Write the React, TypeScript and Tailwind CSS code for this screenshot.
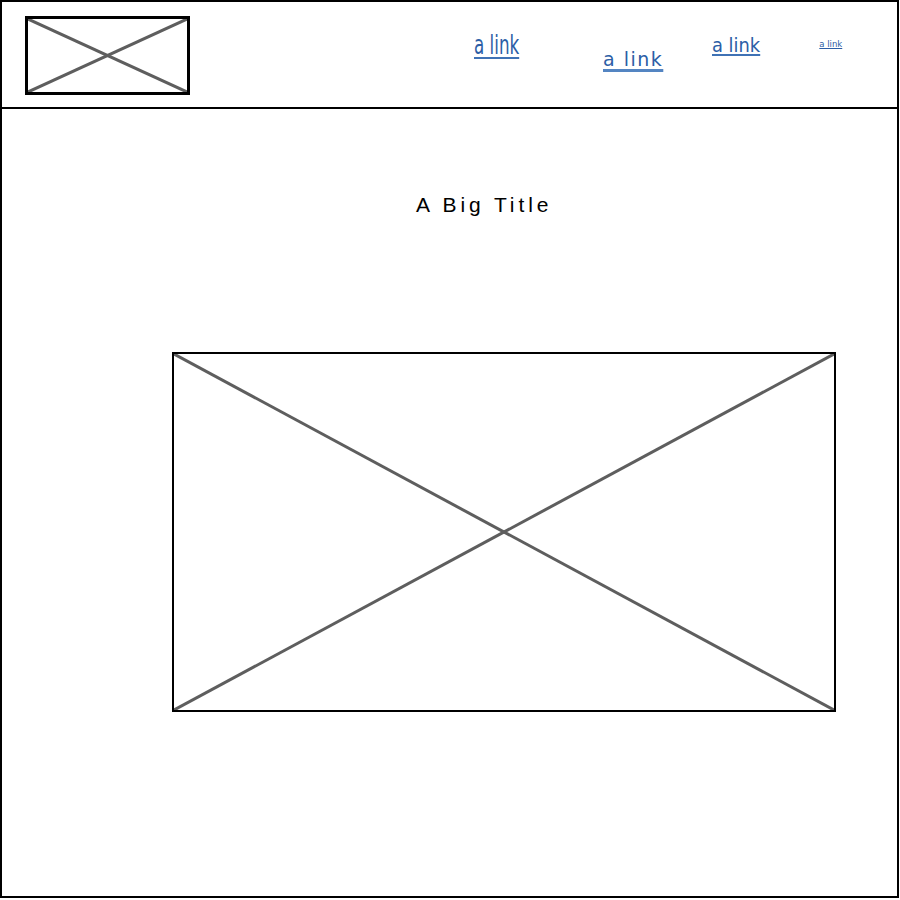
import React from "react";

function Placeholder({ className }: { className: string }) {
  return (
    <div className={`relative bg-white ${className}`}>
      <svg
        className="block w-full h-full"
        viewBox="0 0 100 100"
        preserveAspectRatio="none"
      >
        <line x1="0" y1="0" x2="100" y2="100" stroke="#5e5e5e" strokeWidth="3" vectorEffect="non-scaling-stroke" />
        <line x1="100" y1="0" x2="0" y2="100" stroke="#5e5e5e" strokeWidth="3" vectorEffect="non-scaling-stroke" />
      </svg>
    </div>
  );
}

export default function App() {
  return (
    <div className="w-[899px] h-[898px] border-2 border-black bg-white font-['DejaVu_Sans',sans-serif]">
      {/* Header */}
      <header className="h-[107px] border-b-2 border-black flex items-start">
        <Placeholder className="ml-[23px] mt-[14px] w-[165px] h-[79px] border-[3px] border-black" />

        <a href="#" className="ml-[284px] mt-[29px] w-[45px] block text-[27px] leading-none text-[#2c5ea6]">
          <span className="inline-block origin-left scale-x-[0.62] whitespace-nowrap underline decoration-2 underline-offset-[3px] decoration-[#3f72b5]">
            a link
          </span>
        </a>

        <a href="#" className="ml-[84px] mt-[48px] block whitespace-nowrap text-[19px] tracking-[1.5px] leading-none text-[#2c5ea6] underline decoration-[3px] underline-offset-[3px] decoration-[#5485c2]">
          a link
        </a>

        <a href="#" className="ml-[49px] mt-[34px] w-[48px] block text-[19px] leading-none text-[#2c5ea6]">
          <span className="inline-block origin-left scale-x-[0.94] whitespace-nowrap underline decoration-2 underline-offset-[2px] decoration-[#3f72b5]">
            a link
          </span>
        </a>

        <a href="#" className="ml-[59px] mt-[38px] block whitespace-nowrap text-[8.5px] leading-none text-[#2c5ea6] underline underline-offset-[1px]">
          a link
        </a>
      </header>

      {/* Main */}
      <main>
        <h1 className="pt-[85px] pl-[414px] text-[21px] leading-none tracking-[3.9px] text-black font-['Liberation_Sans',sans-serif] font-normal">
          A Big Title
        </h1>

        <Placeholder className="mt-[137px] ml-[170px] w-[664px] h-[360px] border-2 border-black" />
      </main>
    </div>
  );
}
